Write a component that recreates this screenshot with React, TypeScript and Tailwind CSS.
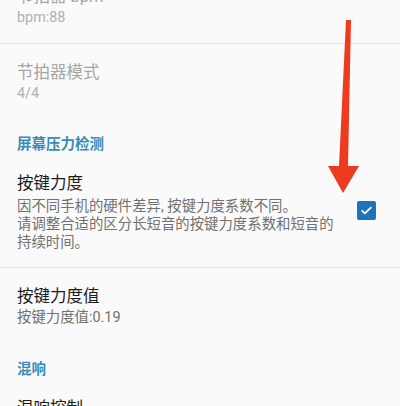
import React from 'react';

const font = { fontFamily: 'Roboto, "Noto Sans CJK SC", sans-serif' };

function Item({ title, sub, muted }: { title: string; sub: string; muted?: boolean }) {
  return (
    <div className="pl-[17px] pr-4 pt-[18px]">
      <div className={`text-[16.5px] leading-[22px] ${muted ? 'text-[#a6a6a6]' : 'text-[#1c1c1c]'}`}>{title}</div>
      <div className={`text-[14.4px] leading-[20px] ${muted ? 'text-[#b0b0b0]' : 'text-[#717171]'}`}>{sub}</div>
    </div>
  );
}

function Header({ text, className }: { text: string; className: string }) {
  return (
    <div className={`pl-[17px] text-[14.5px] leading-[20px] font-semibold text-[#3a8cb8] ${className}`}>{text}</div>
  );
}

export default function App() {
  return (
    <div className="relative w-[400px] h-[406px] overflow-hidden bg-[#fafafa]" style={font}>
      {/* 节拍器 bpm，上半被截掉 */}
      <div className="-mt-[14px] pl-[17px] pb-[15px]">
        <div className="text-[16.5px] leading-[22px] text-[#a6a6a6]">节拍器 bpm</div>
        <div className="text-[14.4px] leading-[20px] text-[#b0b0b0]">bpm:88</div>
      </div>
      <div className="h-px bg-[#e2e2e2]" />

      <Item title="节拍器模式" sub="4/4" muted />

      <Header text="屏幕压力检测" className="mt-[31px]" />

      <div className="flex items-center pl-[17px] pr-[24px] pt-[18px] pb-[15px]">
        <div className="w-[323px]">
          <div className="text-[16.5px] leading-[22px] text-[#1c1c1c]">按键力度</div>
          <div className="mt-[3px] text-[14.4px] leading-[18px] text-[#717171]">
            因不同手机的硬件差异, 按键力度系数不同。
            <br />
            请调整合适的区分长短音的按键力度系数和短音的持续时间。
          </div>
        </div>
        <div className="ml-auto mt-[-4px] flex h-[19px] w-[19px] items-center justify-center rounded-[2px] bg-[#1c74bc]">
          <svg width="13" height="13" viewBox="0 0 24 24" fill="none" stroke="white" strokeWidth="3.2" strokeLinecap="round" strokeLinejoin="round">
            <path d="M4 12.5l5 5L20 6.5" />
          </svg>
        </div>
      </div>
      <div className="h-px bg-[#e2e2e2]" />

      <Item title="按键力度值" sub="按键力度值:0.19" />

      <Header text="混响" className="mt-[32px]" />

      <Item title="混响控制" sub="" />

      {/* 红色箭头标注 */}
      <svg className="absolute left-0 top-0 pointer-events-none" width="400" height="406" viewBox="0 0 400 406">
        <path d="M346 20 L351 20 L348 166 L359 166 L343 193 L328 166 L339 166 Z" fill="#ee3a1f" />
      </svg>
    </div>
  );
}
